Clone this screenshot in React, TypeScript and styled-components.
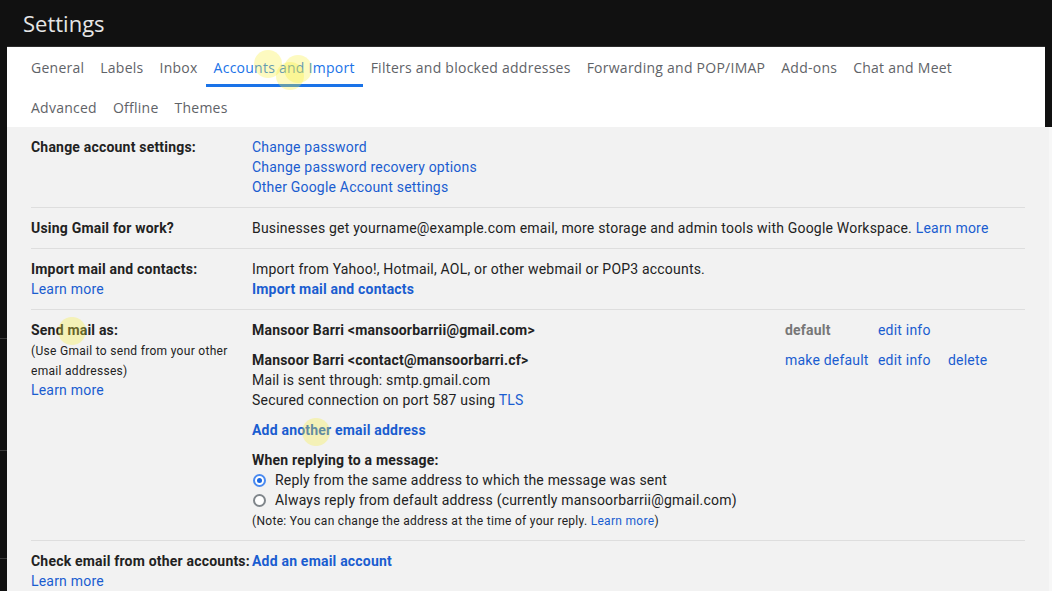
import React from 'react'
import styled, { createGlobalStyle } from 'styled-components'

const GlobalStyle = createGlobalStyle`
  html, body {
    margin: 0;
    padding: 0;
  }
  body {
    background-color: #111;
    background-image:
      linear-gradient(#3a3a3a, #3a3a3a),
      linear-gradient(#3a3a3a, #3a3a3a),
      linear-gradient(#3a3a3a, #3a3a3a);
    background-size: 7px 1px;
    background-repeat: no-repeat;
    background-position: 0 338px, 0 450px, 0 558px;
    font-family: Roboto, 'Liberation Sans', Arial, sans-serif;
    overflow: hidden;
  }
`

const tabs = [
  ['General', 'Labels', 'Inbox', 'Accounts and Import', 'Filters and blocked addresses', 'Forwarding and POP/IMAP', 'Add-ons', 'Chat and Meet'],
  ['Advanced', 'Offline', 'Themes'],
]

const highlights = [
  { x: 268, y: 64 },
  { x: 298, y: 69 },
  { x: 290, y: 76 },
  { x: 72, y: 331 },
  { x: 316, y: 432 },
]

const App = () => {
  return (
    <Page>
      <GlobalStyle />
      <Header>
        <Title>Settings</Title>
      </Header>

      <Panel>
        <TabBar>
          {tabs.map((row, i) => (
            <TabRow key={i}>
              {row.map((tab) => (
                <Tab key={tab} active={tab === 'Accounts and Import'}>
                  {tab}
                </Tab>
              ))}
            </TabRow>
          ))}
        </TabBar>

        <Content>
          <Row>
            <Label>Change account settings:</Label>
            <Value>
              <Link>Change password</Link>
              <Link>Change password recovery options</Link>
              <Link>Other Google Account settings</Link>
            </Value>
          </Row>

          <Row>
            <Label>Using Gmail for work?</Label>
            <Value>
              <Line>
                Businesses get yourname@example.com email, more storage and admin tools with Google Workspace.{' '}
                <InlineLink>Learn more</InlineLink>
              </Line>
            </Value>
          </Row>

          <Row>
            <Label>
              Import mail and contacts:
              <Link>Learn more</Link>
            </Label>
            <Value>
              <Line>Import from Yahoo!, Hotmail, AOL, or other webmail or POP3 accounts.</Line>
              <Link bold>Import mail and contacts</Link>
            </Value>
          </Row>

          <Row>
            <Label>
              Send mail as:
              <Small>(Use Gmail to send from your other email addresses)</Small>
              <Link>Learn more</Link>
            </Label>
            <Value>
              <AccountGrid>
                <AccountCell>
                  <Strong>Mansoor Barri &lt;mansoorbarrii@gmail.com&gt;</Strong>
                </AccountCell>
                <DefaultTag>default</DefaultTag>
                <Link>edit info</Link>
                <span />

                <AccountCell>
                  <Strong>Mansoor Barri &lt;contact@mansoorbarri.cf&gt;</Strong>
                  <Line>Mail is sent through: smtp.gmail.com</Line>
                  <Line>
                    Secured connection on port 587 using <InlineLink>TLS</InlineLink>
                  </Line>
                </AccountCell>
                <Link>make default</Link>
                <Link>edit info</Link>
                <Link>delete</Link>
              </AccountGrid>

              <Block>
                <Link bold>Add another email address</Link>
              </Block>

              <Block>
                <Strong>When replying to a message:</Strong>
                <RadioLine>
                  <Radio checked />
                  Reply from the same address to which the message was sent
                </RadioLine>
                <RadioLine>
                  <Radio />
                  Always reply from default address (currently mansoorbarrii@gmail.com)
                </RadioLine>
                <Note>
                  (Note: You can change the address at the time of your reply. <InlineLink>Learn more</InlineLink>)
                </Note>
              </Block>
            </Value>
          </Row>

          <Row last>
            <Label>
              Check email from other accounts:
              <Link>Learn more</Link>
            </Label>
            <Value>
              <Link bold>Add an email account</Link>
            </Value>
          </Row>
        </Content>
      </Panel>

      {highlights.map((h, i) => (
        <Highlight key={i} style={{ left: h.x - 14, top: h.y - 14 }} />
      ))}
    </Page>
  )
}

const Page = styled.div`
  position: relative;
  width: 1052px;
  height: 591px;
  overflow: hidden;
`

const Header = styled.header`
  height: 46px;
  display: flex;
  align-items: center;
  border-bottom: 1px solid #2c2c2c;
  margin: 0 7px;
  padding-left: 16px;
`

const Title = styled.h1`
  margin: -1px 0 0;
  font-family: 'Open Sans', Roboto, sans-serif;
  font-size: 22px;
  font-weight: 400;
  color: #e6e6e6;
  line-height: 28px;
`

const Panel = styled.div`
  margin-left: 7px;
`

const TabBar = styled.nav`
  width: 1038px;
  height: 80px;
  background: #fff;
  padding-left: 16px;
  box-sizing: border-box;
`

const TabRow = styled.div`
  display: flex;
  height: 40px;
`

const Tab = styled.div<{ active?: boolean }>`
  height: 40px;
  box-sizing: border-box;
  padding: 3px 8px 0;
  display: flex;
  align-items: center;
  font-family: 'Open Sans', Roboto, sans-serif;
  font-size: 14px;
  letter-spacing: 0.25px;
  color: ${(p) => (p.active ? '#1a73e8' : '#5f6368')};
  border-bottom: 3px solid ${(p) => (p.active ? '#1a73e8' : 'transparent')};
  white-space: nowrap;
  cursor: pointer;
`

const Content = styled.div`
  width: 1045px;
  height: 464px;
  box-sizing: border-box;
  background: #f2f2f2;
  border-right: 3px solid #f7f7f7;
  padding: 0 24px;
  font-size: 14px;
  line-height: 20px;
  letter-spacing: 0.2px;
  color: #222;
`

const Row = styled.div<{ last?: boolean }>`
  display: grid;
  grid-template-columns: 221px 1fr;
  padding: 10px 0;
  border-bottom: ${(p) => (p.last ? 'none' : '1px solid #dedede')};
`

const Label = styled.div`
  display: flex;
  flex-direction: column;
  align-items: flex-start;
  font-weight: 700;
  color: #222;
  white-space: nowrap;
`

const Value = styled.div`
  display: flex;
  flex-direction: column;
  align-items: flex-start;
`

const Line = styled.div`
  white-space: nowrap;
`

const Strong = styled.div`
  font-weight: 700;
  white-space: nowrap;
`

const Small = styled.div`
  font-size: 12px;
  font-weight: 400;
  letter-spacing: 0.3px;
  line-height: 20px;
  margin: 1px 0 -1px;
  width: 205px;
  white-space: normal;
`

const Link = styled.a<{ bold?: boolean }>`
  display: block;
  color: #1a5dd0;
  font-weight: ${(p) => (p.bold ? 700 : 400)};
  text-decoration: none;
  cursor: pointer;
  white-space: nowrap;
`

const InlineLink = styled.a`
  color: #1a5dd0;
  text-decoration: none;
  cursor: pointer;
`

const AccountGrid = styled.div`
  display: grid;
  grid-template-columns: 533px 93px 70px auto;
  row-gap: 10px;
  align-items: start;
`

const AccountCell = styled.div`
  display: flex;
  flex-direction: column;
`

const DefaultTag = styled.span`
  font-weight: 700;
  color: #777;
`

const Block = styled.div`
  margin-top: 10px;
  display: flex;
  flex-direction: column;
  align-items: flex-start;
`

const RadioLine = styled.label`
  display: flex;
  align-items: center;
  white-space: nowrap;
`

const Radio = styled.span<{ checked?: boolean }>`
  width: 13px;
  height: 13px;
  box-sizing: border-box;
  border-radius: 50%;
  border: 2px solid ${(p) => (p.checked ? '#4a8af0' : '#80868b')};
  background: #fff;
  margin: 0 9px 0 1px;
  display: flex;
  align-items: center;
  justify-content: center;

  &::after {
    content: '';
    display: ${(p) => (p.checked ? 'block' : 'none')};
    width: 5px;
    height: 5px;
    border-radius: 50%;
    background: #1a67e0;
  }
`

const Note = styled.div`
  font-size: 12px;
  letter-spacing: 0.3px;
  line-height: 18px;
  margin-top: 2px;
  white-space: nowrap;
`

const Highlight = styled.div`
  position: absolute;
  width: 28px;
  height: 28px;
  border-radius: 50%;
  background: rgba(250, 240, 60, 0.32);
  pointer-events: none;
`

export default App
